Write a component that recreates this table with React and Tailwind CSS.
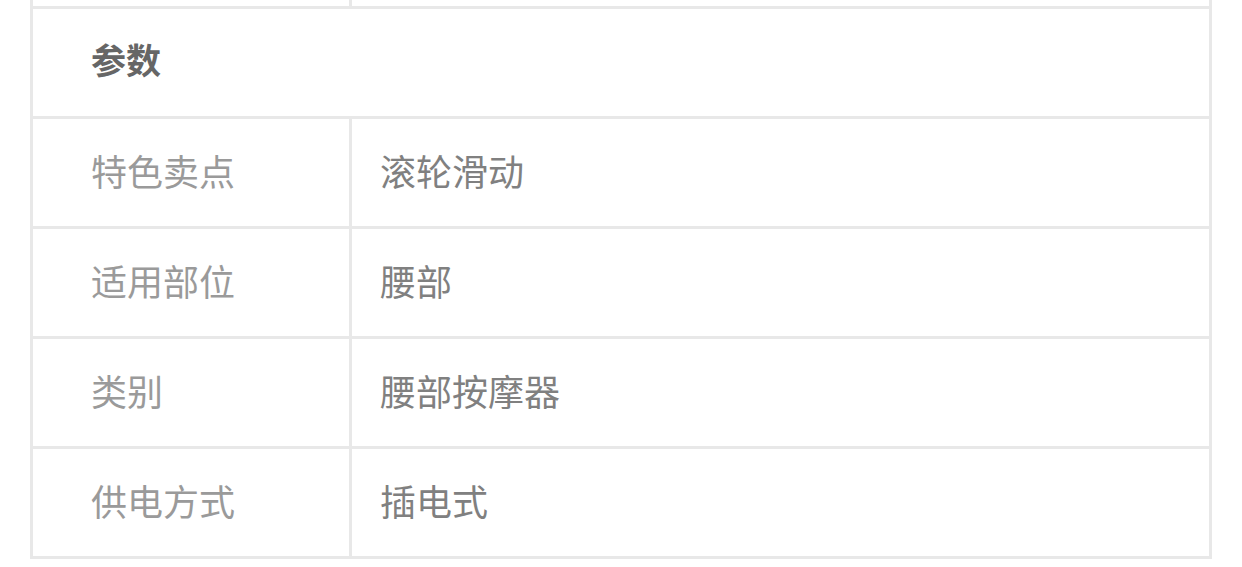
import React from "react";

const rows = [
    { label: "特色卖点", value: "滚轮滑动" },
    { label: "适用部位", value: "腰部" },
    { label: "类别", value: "腰部按摩器" },
    { label: "供电方式", value: "插电式" },
];

function App() {
    return (
        <div
            className="w-[1242px] h-[567px] bg-white overflow-hidden"
            style={{ fontFamily: '"Noto Sans CJK SC", "Noto Sans", sans-serif' }}
        >
            <div className="ml-[30px] w-[1182px] border-x-[3px] border-b-[3px] border-[#e8e8e8]">
                <div className="flex h-[6px]">
                    <div className="w-[319px] border-r-[3px] border-[#e8e8e8]" />
                    <div className="flex-1" />
                </div>
                <div className="h-[110px] border-t-[3px] border-[#e8e8e8] flex items-center pl-[58px] pb-[6px]">
                    <span className="text-[35px] font-bold text-[#666666]">参数</span>
                </div>
                {rows.map((row, index) => {
                    return (
                        <div
                            key={index}
                            className="flex h-[110px] border-t-[3px] border-[#e8e8e8]"
                        >
                            <div className="w-[319px] border-r-[3px] border-[#e8e8e8] flex items-center pl-[58px] pb-[6px]">
                                <span className="text-[36px] text-[#9a9a9a]">
                                    {row.label}
                                </span>
                            </div>
                            <div className="flex-1 flex items-center pl-[28px] pb-[6px]">
                                <span className="text-[36px] text-[#808080]">
                                    {row.value}
                                </span>
                            </div>
                        </div>
                    );
                })}
            </div>
        </div>
    );
}

export default App;
